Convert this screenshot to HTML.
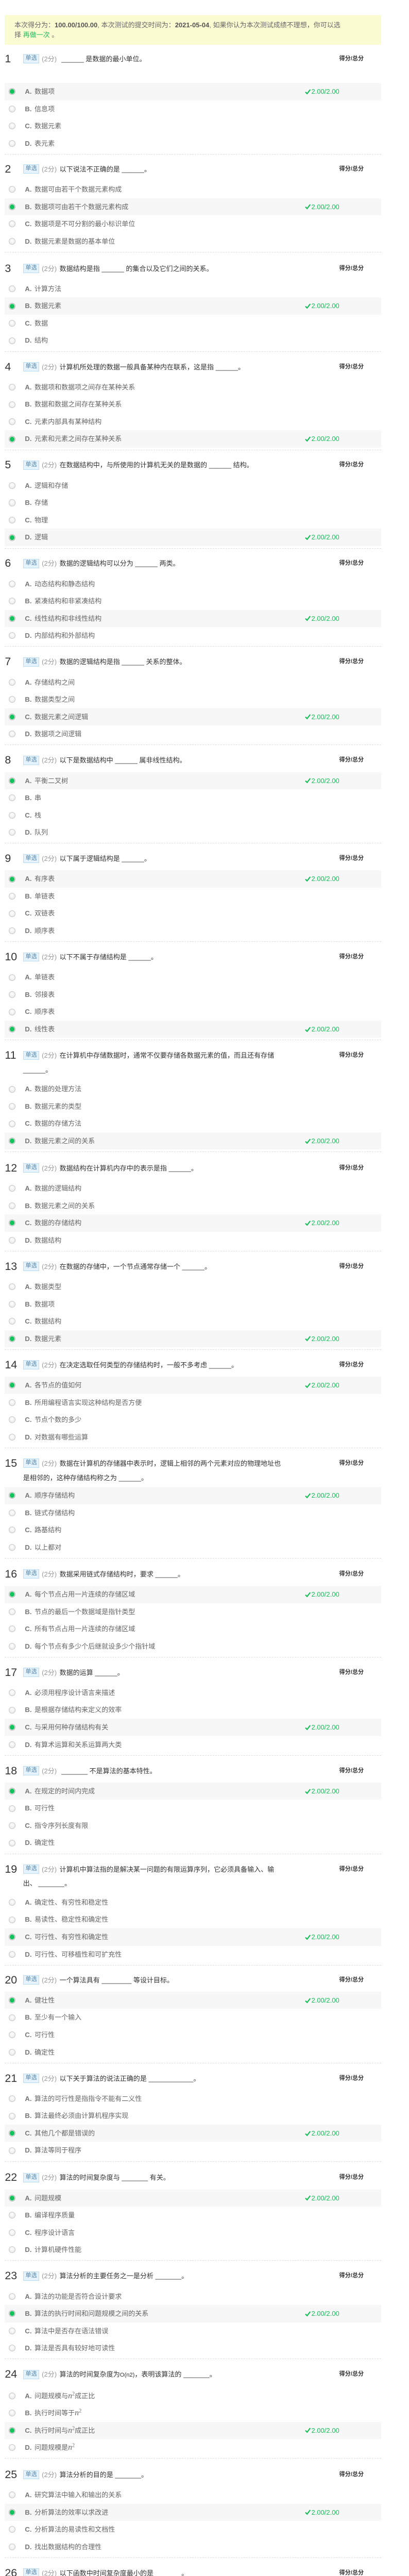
<!DOCTYPE html>
<html><head><meta charset="utf-8">
<style>
*{box-sizing:border-box}
html{zoom:0.9314}
html,body{margin:0;padding:0}
body{width:794px;background:#fff;font-family:"Liberation Sans","Noto Sans CJK SC",sans-serif;}
.top{height:31px}
.bn{margin-left:10px;width:784px;height:62px;background:#fcfcd3;padding:12px 20px 0 20px;font-size:14px;line-height:20px;color:#666;overflow:hidden}
.bn b{color:#555}
.bn .g{color:#19bf5a}
.gap{height:15px}
.q{position:relative;width:794px;overflow:hidden}
.hd{position:relative;padding-left:48px;width:600px;line-height:30px;font-size:14px;color:#333}
.num{position:absolute;left:10px;top:0;font-size:23px;color:#333;line-height:30px}
.bd{display:inline-block;height:19px;line-height:17px;padding:0 4px;border:1px solid #b9dcf5;background:#e4f3fe;color:#5b86aa;font-size:12px;vertical-align:top;margin-top:5px}
.sc{color:#999;margin:0 6px 0 5px}
.tot{position:absolute;left:707px;top:0;font-size:12px;font-weight:bold;color:#333;white-space:nowrap;width:70px}
.ops{margin-top:9px}
.op{position:relative;height:36px;line-height:36px;margin-left:10px;font-size:14px;color:#666;overflow:hidden}
.op.on{background:#f7f7f7}
.rd{position:absolute;left:8px;top:11px;width:14px;height:14px;border-radius:50%;border:1px solid #c6c6c6;background:radial-gradient(circle at 50% 40%,#fff,#e3e3e3)}
.on .rd{background:#12c25c;border:1px solid #b8b8b8;box-shadow:inset 0 0 0 1px #e9e9e9}
.lt{position:absolute;left:42px;top:0;font-weight:bold;color:#777}
.tx{position:absolute;left:62px;top:0;white-space:nowrap}
.ok{position:absolute;left:626px;top:0;color:#19bf5a;font-size:14px;white-space:nowrap}
.ok svg{vertical-align:-1px;margin-right:1px}
.dv{border-top:1px dashed #ddd;margin:4px 0 0 10px;height:0}
.n{font-family:"Liberation Serif",serif;font-style:italic;font-size:17px}
sup{font-family:"Liberation Serif",serif;font-size:11px;line-height:0}
</style></head><body>
<div class="top"></div>
<div class="bn">本次得分为：<b>100.00/100.00</b>, 本次测试的提交时间为：<b>2021-05-04</b>, 如果你认为本次测试成绩不理想，你可以选<br>择 <span class="g">再做一次</span> 。</div>
<div class="gap"></div>

<div class="q" style="height:230px"><div class="hd"><span class="num">1</span><span class="bd">单选</span><span class="sc">(2分)</span> ______ 是数据的最小单位。<span class="tot">得分/总分</span></div>
<div class="ops" style="margin-top:35px">
<div class="op on"><span class="rd"></span><span class="lt">A.</span><span class="tx">数据项</span><span class="ok"><svg width="12" height="11" viewBox="0 0 12 11"><path d="M1 6l3.5 3.5L11 1" stroke="#19bf5a" stroke-width="2.4" fill="none"/></svg>2.00/2.00</span></div>
<div class="op"><span class="rd"></span><span class="lt">B.</span><span class="tx">信息项</span></div>
<div class="op"><span class="rd"></span><span class="lt">C.</span><span class="tx">数据元素</span></div>
<div class="op"><span class="rd"></span><span class="lt">D.</span><span class="tx">表元素</span></div>
</div><div class="dv"></div></div>

<div class="q" style="height:207px"><div class="hd"><span class="num">2</span><span class="bd">单选</span><span class="sc">(2分)</span>以下说法不正确的是 ______。<span class="tot">得分/总分</span></div>
<div class="ops">
<div class="op"><span class="rd"></span><span class="lt">A.</span><span class="tx">数据可由若干个数据元素构成</span></div>
<div class="op on"><span class="rd"></span><span class="lt">B.</span><span class="tx">数据项可由若干个数据元素构成</span><span class="ok"><svg width="12" height="11" viewBox="0 0 12 11"><path d="M1 6l3.5 3.5L11 1" stroke="#19bf5a" stroke-width="2.4" fill="none"/></svg>2.00/2.00</span></div>
<div class="op"><span class="rd"></span><span class="lt">C.</span><span class="tx">数据项是不可分割的最小标识单位</span></div>
<div class="op"><span class="rd"></span><span class="lt">D.</span><span class="tx">数据元素是数据的基本单位</span></div>
</div><div class="dv"></div></div>

<div class="q" style="height:205px"><div class="hd"><span class="num">3</span><span class="bd">单选</span><span class="sc">(2分)</span>数据结构是指 ______ 的集合以及它们之间的关系。<span class="tot">得分/总分</span></div>
<div class="ops">
<div class="op"><span class="rd"></span><span class="lt">A.</span><span class="tx">计算方法</span></div>
<div class="op on"><span class="rd"></span><span class="lt">B.</span><span class="tx">数据元素</span><span class="ok"><svg width="12" height="11" viewBox="0 0 12 11"><path d="M1 6l3.5 3.5L11 1" stroke="#19bf5a" stroke-width="2.4" fill="none"/></svg>2.00/2.00</span></div>
<div class="op"><span class="rd"></span><span class="lt">C.</span><span class="tx">数据</span></div>
<div class="op"><span class="rd"></span><span class="lt">D.</span><span class="tx">结构</span></div>
</div><div class="dv"></div></div>

<div class="q" style="height:205px"><div class="hd"><span class="num">4</span><span class="bd">单选</span><span class="sc">(2分)</span>计算机所处理的数据一般具备某种内在联系，这是指 ______。<span class="tot">得分/总分</span></div>
<div class="ops">
<div class="op"><span class="rd"></span><span class="lt">A.</span><span class="tx">数据项和数据项之间存在某种关系</span></div>
<div class="op"><span class="rd"></span><span class="lt">B.</span><span class="tx">数据和数据之间存在某种关系</span></div>
<div class="op"><span class="rd"></span><span class="lt">C.</span><span class="tx">元素内部具有某种结构</span></div>
<div class="op on"><span class="rd"></span><span class="lt">D.</span><span class="tx">元素和元素之间存在某种关系</span><span class="ok"><svg width="12" height="11" viewBox="0 0 12 11"><path d="M1 6l3.5 3.5L11 1" stroke="#19bf5a" stroke-width="2.4" fill="none"/></svg>2.00/2.00</span></div>
</div><div class="dv"></div></div>

<div class="q" style="height:205px"><div class="hd"><span class="num">5</span><span class="bd">单选</span><span class="sc">(2分)</span>在数据结构中，与所使用的计算机无关的是数据的 ______ 结构。<span class="tot">得分/总分</span></div>
<div class="ops">
<div class="op"><span class="rd"></span><span class="lt">A.</span><span class="tx">逻辑和存储</span></div>
<div class="op"><span class="rd"></span><span class="lt">B.</span><span class="tx">存储</span></div>
<div class="op"><span class="rd"></span><span class="lt">C.</span><span class="tx">物理</span></div>
<div class="op on"><span class="rd"></span><span class="lt">D.</span><span class="tx">逻辑</span><span class="ok"><svg width="12" height="11" viewBox="0 0 12 11"><path d="M1 6l3.5 3.5L11 1" stroke="#19bf5a" stroke-width="2.4" fill="none"/></svg>2.00/2.00</span></div>
</div><div class="dv"></div></div>

<div class="q" style="height:205px"><div class="hd"><span class="num">6</span><span class="bd">单选</span><span class="sc">(2分)</span>数据的逻辑结构可以分为 ______ 两类。<span class="tot">得分/总分</span></div>
<div class="ops">
<div class="op"><span class="rd"></span><span class="lt">A.</span><span class="tx">动态结构和静态结构</span></div>
<div class="op"><span class="rd"></span><span class="lt">B.</span><span class="tx">紧凑结构和非紧凑结构</span></div>
<div class="op on"><span class="rd"></span><span class="lt">C.</span><span class="tx">线性结构和非线性结构</span><span class="ok"><svg width="12" height="11" viewBox="0 0 12 11"><path d="M1 6l3.5 3.5L11 1" stroke="#19bf5a" stroke-width="2.4" fill="none"/></svg>2.00/2.00</span></div>
<div class="op"><span class="rd"></span><span class="lt">D.</span><span class="tx">内部结构和外部结构</span></div>
</div><div class="dv"></div></div>

<div class="q" style="height:205px"><div class="hd"><span class="num">7</span><span class="bd">单选</span><span class="sc">(2分)</span>数据的逻辑结构是指 ______ 关系的整体。<span class="tot">得分/总分</span></div>
<div class="ops">
<div class="op"><span class="rd"></span><span class="lt">A.</span><span class="tx">存储结构之间</span></div>
<div class="op"><span class="rd"></span><span class="lt">B.</span><span class="tx">数据类型之间</span></div>
<div class="op on"><span class="rd"></span><span class="lt">C.</span><span class="tx">数据元素之间逻辑</span><span class="ok"><svg width="12" height="11" viewBox="0 0 12 11"><path d="M1 6l3.5 3.5L11 1" stroke="#19bf5a" stroke-width="2.4" fill="none"/></svg>2.00/2.00</span></div>
<div class="op"><span class="rd"></span><span class="lt">D.</span><span class="tx">数据项之间逻辑</span></div>
</div><div class="dv"></div></div>

<div class="q" style="height:205px"><div class="hd"><span class="num">8</span><span class="bd">单选</span><span class="sc">(2分)</span>以下是数据结构中 ______ 属非线性结构。<span class="tot">得分/总分</span></div>
<div class="ops">
<div class="op on"><span class="rd"></span><span class="lt">A.</span><span class="tx">平衡二叉树</span><span class="ok"><svg width="12" height="11" viewBox="0 0 12 11"><path d="M1 6l3.5 3.5L11 1" stroke="#19bf5a" stroke-width="2.4" fill="none"/></svg>2.00/2.00</span></div>
<div class="op"><span class="rd"></span><span class="lt">B.</span><span class="tx">串</span></div>
<div class="op"><span class="rd"></span><span class="lt">C.</span><span class="tx">栈</span></div>
<div class="op"><span class="rd"></span><span class="lt">D.</span><span class="tx">队列</span></div>
</div><div class="dv"></div></div>

<div class="q" style="height:205px"><div class="hd"><span class="num">9</span><span class="bd">单选</span><span class="sc">(2分)</span>以下属于逻辑结构是 ______。<span class="tot">得分/总分</span></div>
<div class="ops">
<div class="op on"><span class="rd"></span><span class="lt">A.</span><span class="tx">有序表</span><span class="ok"><svg width="12" height="11" viewBox="0 0 12 11"><path d="M1 6l3.5 3.5L11 1" stroke="#19bf5a" stroke-width="2.4" fill="none"/></svg>2.00/2.00</span></div>
<div class="op"><span class="rd"></span><span class="lt">B.</span><span class="tx">单链表</span></div>
<div class="op"><span class="rd"></span><span class="lt">C.</span><span class="tx">双链表</span></div>
<div class="op"><span class="rd"></span><span class="lt">D.</span><span class="tx">顺序表</span></div>
</div><div class="dv"></div></div>

<div class="q" style="height:205px"><div class="hd"><span class="num">10</span><span class="bd">单选</span><span class="sc">(2分)</span>以下不属于存储结构是 ______。<span class="tot">得分/总分</span></div>
<div class="ops">
<div class="op"><span class="rd"></span><span class="lt">A.</span><span class="tx">单链表</span></div>
<div class="op"><span class="rd"></span><span class="lt">B.</span><span class="tx">邻接表</span></div>
<div class="op"><span class="rd"></span><span class="lt">C.</span><span class="tx">顺序表</span></div>
<div class="op on"><span class="rd"></span><span class="lt">D.</span><span class="tx">线性表</span><span class="ok"><svg width="12" height="11" viewBox="0 0 12 11"><path d="M1 6l3.5 3.5L11 1" stroke="#19bf5a" stroke-width="2.4" fill="none"/></svg>2.00/2.00</span></div>
</div><div class="dv"></div></div>

<div class="q" style="height:235px"><div class="hd"><span class="num">11</span><span class="bd">单选</span><span class="sc">(2分)</span>在计算机中存储数据时，通常不仅要存储各数据元素的值，而且还有存储<br>______。<span class="tot">得分/总分</span></div>
<div class="ops" style="margin-top:7px">
<div class="op"><span class="rd"></span><span class="lt">A.</span><span class="tx">数据的处理方法</span></div>
<div class="op"><span class="rd"></span><span class="lt">B.</span><span class="tx">数据元素的类型</span></div>
<div class="op"><span class="rd"></span><span class="lt">C.</span><span class="tx">数据的存储方法</span></div>
<div class="op on"><span class="rd"></span><span class="lt">D.</span><span class="tx">数据元素之间的关系</span><span class="ok"><svg width="12" height="11" viewBox="0 0 12 11"><path d="M1 6l3.5 3.5L11 1" stroke="#19bf5a" stroke-width="2.4" fill="none"/></svg>2.00/2.00</span></div>
</div><div class="dv"></div></div>

<div class="q" style="height:205px"><div class="hd"><span class="num">12</span><span class="bd">单选</span><span class="sc">(2分)</span>数据结构在计算机内存中的表示是指 ______。<span class="tot">得分/总分</span></div>
<div class="ops">
<div class="op"><span class="rd"></span><span class="lt">A.</span><span class="tx">数据的逻辑结构</span></div>
<div class="op"><span class="rd"></span><span class="lt">B.</span><span class="tx">数据元素之间的关系</span></div>
<div class="op on"><span class="rd"></span><span class="lt">C.</span><span class="tx">数据的存储结构</span><span class="ok"><svg width="12" height="11" viewBox="0 0 12 11"><path d="M1 6l3.5 3.5L11 1" stroke="#19bf5a" stroke-width="2.4" fill="none"/></svg>2.00/2.00</span></div>
<div class="op"><span class="rd"></span><span class="lt">D.</span><span class="tx">数据结构</span></div>
</div><div class="dv"></div></div>

<div class="q" style="height:205px"><div class="hd"><span class="num">13</span><span class="bd">单选</span><span class="sc">(2分)</span>在数据的存储中，一个节点通常存储一个 ______。<span class="tot">得分/总分</span></div>
<div class="ops">
<div class="op"><span class="rd"></span><span class="lt">A.</span><span class="tx">数据类型</span></div>
<div class="op"><span class="rd"></span><span class="lt">B.</span><span class="tx">数据项</span></div>
<div class="op"><span class="rd"></span><span class="lt">C.</span><span class="tx">数据结构</span></div>
<div class="op on"><span class="rd"></span><span class="lt">D.</span><span class="tx">数据元素</span><span class="ok"><svg width="12" height="11" viewBox="0 0 12 11"><path d="M1 6l3.5 3.5L11 1" stroke="#19bf5a" stroke-width="2.4" fill="none"/></svg>2.00/2.00</span></div>
</div><div class="dv"></div></div>

<div class="q" style="height:205px"><div class="hd"><span class="num">14</span><span class="bd">单选</span><span class="sc">(2分)</span>在决定选取任何类型的存储结构时，一般不多考虑 ______。<span class="tot">得分/总分</span></div>
<div class="ops">
<div class="op on"><span class="rd"></span><span class="lt">A.</span><span class="tx">各节点的值如何</span><span class="ok"><svg width="12" height="11" viewBox="0 0 12 11"><path d="M1 6l3.5 3.5L11 1" stroke="#19bf5a" stroke-width="2.4" fill="none"/></svg>2.00/2.00</span></div>
<div class="op"><span class="rd"></span><span class="lt">B.</span><span class="tx">所用编程语言实现这种结构是否方便</span></div>
<div class="op"><span class="rd"></span><span class="lt">C.</span><span class="tx">节点个数的多少</span></div>
<div class="op"><span class="rd"></span><span class="lt">D.</span><span class="tx">对数据有哪些运算</span></div>
</div><div class="dv"></div></div>

<div class="q" style="height:231px"><div class="hd"><span class="num">15</span><span class="bd">单选</span><span class="sc">(2分)</span>数据在计算机的存储器中表示时，逻辑上相邻的两个元素对应的物理地址也<br>是相邻的，这种存储结构称之为 ______。<span class="tot">得分/总分</span></div>
<div class="ops" style="margin-top:4px">
<div class="op on"><span class="rd"></span><span class="lt">A.</span><span class="tx">顺序存储结构</span><span class="ok"><svg width="12" height="11" viewBox="0 0 12 11"><path d="M1 6l3.5 3.5L11 1" stroke="#19bf5a" stroke-width="2.4" fill="none"/></svg>2.00/2.00</span></div>
<div class="op"><span class="rd"></span><span class="lt">B.</span><span class="tx">链式存储结构</span></div>
<div class="op"><span class="rd"></span><span class="lt">C.</span><span class="tx">路基结构</span></div>
<div class="op"><span class="rd"></span><span class="lt">D.</span><span class="tx">以上都对</span></div>
</div><div class="dv"></div></div>

<div class="q" style="height:205px"><div class="hd"><span class="num">16</span><span class="bd">单选</span><span class="sc">(2分)</span>数据采用链式存储结构时，要求 ______。<span class="tot">得分/总分</span></div>
<div class="ops">
<div class="op on"><span class="rd"></span><span class="lt">A.</span><span class="tx">每个节点占用一片连续的存储区域</span><span class="ok"><svg width="12" height="11" viewBox="0 0 12 11"><path d="M1 6l3.5 3.5L11 1" stroke="#19bf5a" stroke-width="2.4" fill="none"/></svg>2.00/2.00</span></div>
<div class="op"><span class="rd"></span><span class="lt">B.</span><span class="tx">节点的最后一个数据域是指针类型</span></div>
<div class="op"><span class="rd"></span><span class="lt">C.</span><span class="tx">所有节点占用一片连续的存储区域</span></div>
<div class="op"><span class="rd"></span><span class="lt">D.</span><span class="tx">每个节点有多少个后继就设多少个指针域</span></div>
</div><div class="dv"></div></div>

<div class="q" style="height:205px"><div class="hd"><span class="num">17</span><span class="bd">单选</span><span class="sc">(2分)</span>数据的运算 ______。<span class="tot">得分/总分</span></div>
<div class="ops">
<div class="op"><span class="rd"></span><span class="lt">A.</span><span class="tx">必须用程序设计语言来描述</span></div>
<div class="op"><span class="rd"></span><span class="lt">B.</span><span class="tx">是根据存储结构来定义的效率</span></div>
<div class="op on"><span class="rd"></span><span class="lt">C.</span><span class="tx">与采用何种存储结构有关</span><span class="ok"><svg width="12" height="11" viewBox="0 0 12 11"><path d="M1 6l3.5 3.5L11 1" stroke="#19bf5a" stroke-width="2.4" fill="none"/></svg>2.00/2.00</span></div>
<div class="op"><span class="rd"></span><span class="lt">D.</span><span class="tx">有算术运算和关系运算两大类</span></div>
</div><div class="dv"></div></div>

<div class="q" style="height:205px"><div class="hd"><span class="num">18</span><span class="bd">单选</span><span class="sc">(2分)</span> _______ 不是算法的基本特性。<span class="tot">得分/总分</span></div>
<div class="ops">
<div class="op on"><span class="rd"></span><span class="lt">A.</span><span class="tx">在规定的时间内完成</span><span class="ok"><svg width="12" height="11" viewBox="0 0 12 11"><path d="M1 6l3.5 3.5L11 1" stroke="#19bf5a" stroke-width="2.4" fill="none"/></svg>2.00/2.00</span></div>
<div class="op"><span class="rd"></span><span class="lt">B.</span><span class="tx">可行性</span></div>
<div class="op"><span class="rd"></span><span class="lt">C.</span><span class="tx">指令序列长度有限</span></div>
<div class="op"><span class="rd"></span><span class="lt">D.</span><span class="tx">确定性</span></div>
</div><div class="dv"></div></div>

<div class="q" style="height:231px"><div class="hd"><span class="num">19</span><span class="bd">单选</span><span class="sc">(2分)</span>计算机中算法指的是解决某一问题的有限运算序列，它必须具备输入、输<br>出、 _______。<span class="tot">得分/总分</span></div>
<div class="ops" style="margin-top:6px">
<div class="op"><span class="rd"></span><span class="lt">A.</span><span class="tx">确定性、有穷性和稳定性</span></div>
<div class="op"><span class="rd"></span><span class="lt">B.</span><span class="tx">易读性、稳定性和确定性</span></div>
<div class="op on"><span class="rd"></span><span class="lt">C.</span><span class="tx">可行性、有穷性和确定性</span><span class="ok"><svg width="12" height="11" viewBox="0 0 12 11"><path d="M1 6l3.5 3.5L11 1" stroke="#19bf5a" stroke-width="2.4" fill="none"/></svg>2.00/2.00</span></div>
<div class="op"><span class="rd"></span><span class="lt">D.</span><span class="tx">可行性、可移植性和可扩充性</span></div>
</div><div class="dv"></div></div>

<div class="q" style="height:205px"><div class="hd"><span class="num">20</span><span class="bd">单选</span><span class="sc">(2分)</span>一个算法具有 ________ 等设计目标。<span class="tot">得分/总分</span></div>
<div class="ops">
<div class="op on"><span class="rd"></span><span class="lt">A.</span><span class="tx">健壮性</span><span class="ok"><svg width="12" height="11" viewBox="0 0 12 11"><path d="M1 6l3.5 3.5L11 1" stroke="#19bf5a" stroke-width="2.4" fill="none"/></svg>2.00/2.00</span></div>
<div class="op"><span class="rd"></span><span class="lt">B.</span><span class="tx">至少有一个输入</span></div>
<div class="op"><span class="rd"></span><span class="lt">C.</span><span class="tx">可行性</span></div>
<div class="op"><span class="rd"></span><span class="lt">D.</span><span class="tx">确定性</span></div>
</div><div class="dv"></div></div>

<div class="q" style="height:207px"><div class="hd"><span class="num">21</span><span class="bd">单选</span><span class="sc">(2分)</span>以下关于算法的说法正确的是 ____________。<span class="tot">得分/总分</span></div>
<div class="ops">
<div class="op"><span class="rd"></span><span class="lt">A.</span><span class="tx">算法的可行性是指指令不能有二义性</span></div>
<div class="op"><span class="rd"></span><span class="lt">B.</span><span class="tx">算法最终必须由计算机程序实现</span></div>
<div class="op on"><span class="rd"></span><span class="lt">C.</span><span class="tx">其他几个都是错误的</span><span class="ok"><svg width="12" height="11" viewBox="0 0 12 11"><path d="M1 6l3.5 3.5L11 1" stroke="#19bf5a" stroke-width="2.4" fill="none"/></svg>2.00/2.00</span></div>
<div class="op"><span class="rd"></span><span class="lt">D.</span><span class="tx">算法等同于程序</span></div>
</div><div class="dv"></div></div>

<div class="q" style="height:205px"><div class="hd"><span class="num">22</span><span class="bd">单选</span><span class="sc">(2分)</span>算法的时间复杂度与 _______ 有关。<span class="tot">得分/总分</span></div>
<div class="ops">
<div class="op on"><span class="rd"></span><span class="lt">A.</span><span class="tx">问题规模</span><span class="ok"><svg width="12" height="11" viewBox="0 0 12 11"><path d="M1 6l3.5 3.5L11 1" stroke="#19bf5a" stroke-width="2.4" fill="none"/></svg>2.00/2.00</span></div>
<div class="op"><span class="rd"></span><span class="lt">B.</span><span class="tx">编译程序质量</span></div>
<div class="op"><span class="rd"></span><span class="lt">C.</span><span class="tx">程序设计语言</span></div>
<div class="op"><span class="rd"></span><span class="lt">D.</span><span class="tx">计算机硬件性能</span></div>
</div><div class="dv"></div></div>

<div class="q" style="height:205px"><div class="hd"><span class="num">23</span><span class="bd">单选</span><span class="sc">(2分)</span>算法分析的主要任务之一是分析 _______。<span class="tot">得分/总分</span></div>
<div class="ops">
<div class="op"><span class="rd"></span><span class="lt">A.</span><span class="tx">算法的功能是否符合设计要求</span></div>
<div class="op on"><span class="rd"></span><span class="lt">B.</span><span class="tx">算法的执行时间和问题规模之间的关系</span><span class="ok"><svg width="12" height="11" viewBox="0 0 12 11"><path d="M1 6l3.5 3.5L11 1" stroke="#19bf5a" stroke-width="2.4" fill="none"/></svg>2.00/2.00</span></div>
<div class="op"><span class="rd"></span><span class="lt">C.</span><span class="tx">算法中是否存在语法错误</span></div>
<div class="op"><span class="rd"></span><span class="lt">D.</span><span class="tx">算法是否具有较好地可读性</span></div>
</div><div class="dv"></div></div>

<div class="q" style="height:209px"><div class="hd"><span class="num">24</span><span class="bd">单选</span><span class="sc">(2分)</span>算法的时间复杂度为<span style="font-size:12px">O(n2)</span>，表明该算法的 _______。<span class="tot">得分/总分</span></div>
<div class="ops">
<div class="op"><span class="rd"></span><span class="lt">A.</span><span class="tx">问题规模与<span class="n">n</span><sup>2</sup>成正比</span></div>
<div class="op"><span class="rd"></span><span class="lt">B.</span><span class="tx">执行时间等于<span class="n">n</span><sup>2</sup></span></div>
<div class="op on"><span class="rd"></span><span class="lt">C.</span><span class="tx">执行时间与<span class="n">n</span><sup>2</sup>成正比</span><span class="ok"><svg width="12" height="11" viewBox="0 0 12 11"><path d="M1 6l3.5 3.5L11 1" stroke="#19bf5a" stroke-width="2.4" fill="none"/></svg>2.00/2.00</span></div>
<div class="op"><span class="rd"></span><span class="lt">D.</span><span class="tx">问题规模是<span class="n">n</span><sup>2</sup></span></div>
</div><div class="dv"></div></div>

<div class="q" style="height:205px"><div class="hd"><span class="num">25</span><span class="bd">单选</span><span class="sc">(2分)</span>算法分析的目的是 _______。<span class="tot">得分/总分</span></div>
<div class="ops">
<div class="op"><span class="rd"></span><span class="lt">A.</span><span class="tx">研究算法中输入和输出的关系</span></div>
<div class="op on"><span class="rd"></span><span class="lt">B.</span><span class="tx">分析算法的效率以求改进</span><span class="ok"><svg width="12" height="11" viewBox="0 0 12 11"><path d="M1 6l3.5 3.5L11 1" stroke="#19bf5a" stroke-width="2.4" fill="none"/></svg>2.00/2.00</span></div>
<div class="op"><span class="rd"></span><span class="lt">C.</span><span class="tx">分析算法的易读性和文档性</span></div>
<div class="op"><span class="rd"></span><span class="lt">D.</span><span class="tx">找出数据结构的合理性</span></div>
</div><div class="dv"></div></div>

<div class="q" style="height:34px"><div class="hd"><span class="num">26</span><span class="bd">单选</span><span class="sc">(2分)</span>以下函数中时间复杂度最小的是 _______。<span class="tot">得分/总分</span></div></div>

</body></html>
